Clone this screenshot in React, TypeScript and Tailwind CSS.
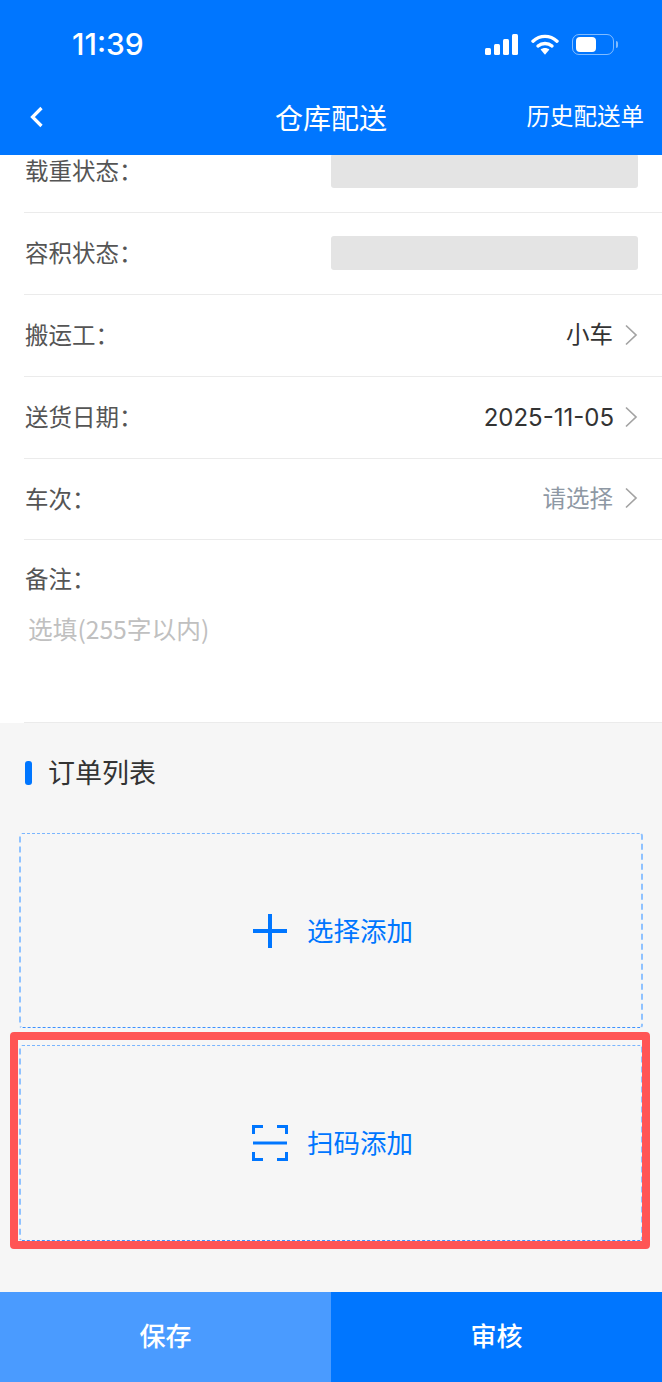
import React from "react";

const font = { fontFamily: '"Noto Sans CJK SC", sans-serif' };

const Chevron = () => (
  <svg width="14" height="22" viewBox="0 0 14 22" fill="none" className="mb-[2px] ml-[11px] shrink-0">
    <path d="M2 1.5 L12 11 L2 20.5" stroke="#a3a3a3" strokeWidth="1.7" />
  </svg>
);

const StatusIcons = () => (
  <div className="flex items-center">
    <svg width="33" height="21" viewBox="0 0 33 21" fill="white">
      <rect x="0" y="14" width="6" height="7" rx="1.5" />
      <rect x="9" y="10" width="6" height="11" rx="1.5" />
      <rect x="18" y="5" width="6" height="16" rx="1.5" />
      <rect x="27" y="0" width="6" height="21" rx="1.5" />
    </svg>
    <svg width="28" height="21" viewBox="0 0 28 21" fill="none" className="ml-[13px]">
      <path d="M2 7.2 C9 0.800 19 0.800 26 7.2" stroke="white" strokeWidth="3.4" strokeLinecap="round" />
      <path d="M7 12 C11 8.600 17 8.600 21 12" stroke="white" strokeWidth="3.4" strokeLinecap="round" />
      <path d="M9.600 15.500 L14 20.800 L18.400 15.500 C15.800 13.500 12.200 13.500 9.600 15.500 Z" fill="white" />
    </svg>
    <div className="ml-[13px] flex items-center">
      <div className="flex h-[21px] w-[42px] items-center rounded-[7px] border border-white/50 p-[3px]">
        <div className="h-[15px] w-[20px] rounded-[4px] bg-white" />
      </div>
      <div className="ml-[2px] h-[7px] w-[2px] rounded-r-sm bg-white/50" />
    </div>
  </div>
);

const Row = ({
  label,
  className = "h-[82px]",
  children,
}: {
  label: string;
  className?: string;
  children?: React.ReactNode;
}) => (
  <div className={`ml-6 flex items-center justify-between border-b border-[#ebebeb] pr-6 ${className}`}>
    <span className="mb-[3px] ml-px text-[23.5px] leading-[30px] text-[#555555]">{label}：</span>
    {children}
  </div>
);

const DashedBox = ({
  icon,
  text,
  className,
}: {
  icon: React.ReactNode;
  text: string;
  className: string;
}) => (
  <div
    className={`flex items-center justify-center rounded-[3px] border-x-2 border-y border-dashed border-x-[#8fc2ff] border-t-[#7ab6ff] border-b-[#3d92ff] pl-[3px] ${className}`}
  >
    {icon}
    <span className="mb-[2px] ml-[19px] text-[26.5px] text-[#0076ff]">{text}</span>
  </div>
);

export default function App() {
  return (
    <div className="relative flex h-[1382px] w-[662px] flex-col overflow-hidden bg-[#f6f6f6]" style={font}>
      {/* Header */}
      <div className="relative z-10 h-[155px] shrink-0 bg-[#0076ff] text-white">
        <div className="flex h-[88px] items-center justify-between pr-[44px] pl-[72px]">
          <span className="text-[30px] font-medium" style={{ fontFamily: "Inter, sans-serif" }}>11:39</span>
          <StatusIcons />
        </div>
        <div className="relative flex h-[57px] items-center justify-between pr-[18px] pl-[29px]">
          <svg width="15" height="22" viewBox="0 0 15 22" fill="none">
            <path d="M12.500 2 L3.500 11 L12.500 20" stroke="white" strokeWidth="3.2" />
          </svg>
          <span className="absolute top-0 left-0 flex h-[57px] w-full items-center justify-center text-[28px]">仓库配送</span>
          <span className="mb-[2px] text-[23.5px]">历史配送单</span>
        </div>
      </div>

      {/* Form */}
      <div className="shrink-0 overflow-hidden bg-white">
        <div className="-mt-[24px]">
          <Row label="载重状态">
            <div className="mb-[2px] h-[34px] w-[307px] rounded-[3px] bg-[#e4e4e4]" />
          </Row>
          <Row label="容积状态">
            <div className="mb-[2px] h-[34px] w-[307px] rounded-[3px] bg-[#e4e4e4]" />
          </Row>
          <Row label="搬运工">
            <div className="flex items-center">
              <span className="mb-[3px] text-[23.5px] text-[#333333]">小车</span>
              <Chevron />
            </div>
          </Row>
          <Row label="送货日期">
            <div className="flex items-center">
              <span className="-mr-px text-[24px] text-[#333333]" style={{ fontFamily: "Inter, sans-serif" }}>2025-11-05</span>
              <Chevron />
            </div>
          </Row>
          <Row label="车次" className="h-[81px]">
            <div className="flex items-center">
              <span className="mb-[3px] text-[23.5px] text-[#8e98a4]">请选择</span>
              <Chevron />
            </div>
          </Row>
          <div className="ml-6 flex h-[183px] flex-col border-b border-[#ebebeb]">
            <span className="mt-[21px] ml-px text-[23.5px] leading-[34px] text-[#555555]">备注：</span>
            <span className="mt-[15px] ml-1 text-[24.7px] leading-[36px] text-[#c0c0c0]">选填(255字以内)</span>
          </div>
        </div>
      </div>

      {/* Order list */}
      <div className="flex-1 px-[19px]">
        <div className="mt-[38px] ml-[6px] flex h-[24px] items-center">
          <div className="h-[24px] w-[7px] rounded-[3px] bg-[#0076ff]" />
          <span className="mb-[2px] ml-4 text-[27px] text-[#333333]">订单列表</span>
        </div>
        <div className="mt-[48px] flex flex-col gap-[17px]">
          <DashedBox
            className="h-[195px]"
            text="选择添加"
            icon={
              <svg width="36" height="36" viewBox="0 0 36 36" fill="#0076ff">
                <rect x="16" y="1" width="4" height="34" />
                <rect x="1" y="16" width="34" height="4" />
              </svg>
            }
          />
          <DashedBox
            className="h-[196px]"
            text="扫码添加"
            icon={
              <svg width="36" height="36" viewBox="0 0 36 36" fill="none" stroke="#0076ff" strokeWidth="3">
                <path d="M11 1.500 H1.500 V9" />
                <path d="M25 1.500 H34.500 V9" />
                <path d="M11 34.500 H1.500 V27" />
                <path d="M25 34.500 H34.500 V27" />
                <path d="M1 18 H35" />
              </svg>
            }
          />
        </div>
      </div>

      {/* Bottom buttons */}
      <div className="flex h-[90px] shrink-0 text-[26px] font-medium text-white">
        <div className="flex flex-1 items-center justify-center bg-[#4a9bff] pb-[6px]">保存</div>
        <div className="flex flex-1 items-center justify-center bg-[#0076ff] pb-[6px]">审核</div>
      </div>

      {/* Highlight annotation */}
      <div className="absolute top-[1032px] left-[10px] h-[217px] w-[640px] rounded-[4px] border-[8px] border-[#ff5555]" />
    </div>
  );
}
